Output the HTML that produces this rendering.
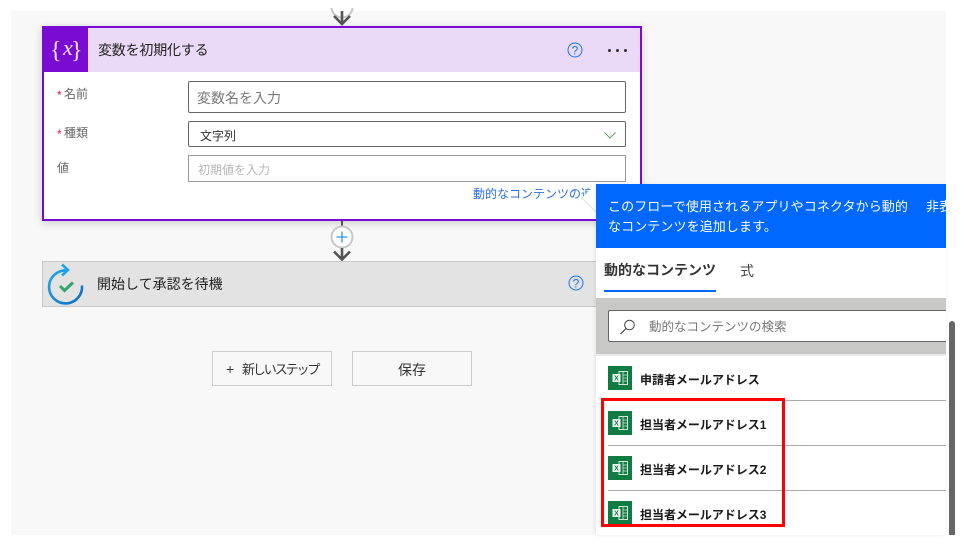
<!DOCTYPE html>
<html lang="ja">
<head>
<meta charset="utf-8">
<style>
html,body{margin:0;padding:0;background:#fff;}
body{width:962px;height:546px;position:relative;overflow:hidden;font-family:"Liberation Sans","Noto Sans CJK JP",sans-serif;color:#333;}
.a{position:absolute;box-sizing:border-box;}
.t{position:absolute;white-space:nowrap;line-height:1;}
.item{position:absolute;left:640px;font-size:12px;font-weight:700;color:#1a1a1a;white-space:nowrap;line-height:1;letter-spacing:-.03px;}
.sep{position:absolute;left:608px;width:338px;height:1px;background:#ababab;}
.star{position:absolute;white-space:nowrap;line-height:1;color:#e8112d;font-size:12px;}
</style>
</head>
<body>
<div class="a" style="left:11px;top:11px;width:935px;height:524px;background:#f8f8f8;"></div>

<!-- top arrow -->
<svg class="a" style="left:330px;top:8px;" width="24" height="20" viewBox="0 0 24 20">
<circle cx="12" cy="-1" r="10.500" fill="#fff" stroke="#c8c8c8" stroke-width="2"/>
<path d="M12 3V16M4 8L12 16L20 8" fill="none" stroke="#555" stroke-width="2.600"/>
</svg>

<!-- card -->
<div class="a" style="left:42px;top:26px;width:600px;height:195px;background:#fff;border:2px solid #7a0bd2;box-shadow:0 2px 8px rgba(0,0,0,.18);"></div>
<div class="a" style="left:44px;top:28px;width:596px;height:44px;background:#ead9f7;"></div>
<div class="a" style="left:44px;top:28px;width:44px;height:44px;background:#7a0bd2;"></div>
<div class="t" style="left:50px;top:39px;font-size:24px;color:#f3e6ff;font-family:'Liberation Serif',serif;">{</div>
<div class="t" style="left:63px;top:37px;font-size:22px;font-style:italic;color:#f3e6ff;font-family:'Liberation Serif',serif;">x</div>
<div class="t" style="left:71px;top:39px;font-size:24px;color:#f3e6ff;font-family:'Liberation Serif',serif;">}</div>
<div class="t" style="left:98px;top:43px;font-size:14px;letter-spacing:-.2px;color:#222;">変数を初期化する</div>
<svg class="a" style="left:567px;top:42px;" width="16" height="16" viewBox="0 0 16 16">
<circle cx="8" cy="8" r="7" fill="none" stroke="#1a73e8" stroke-width="1"/>
<text x="8" y="12.500" font-size="12" text-anchor="middle" fill="#1a73e8" font-family="Liberation Sans">?</text>
</svg>
<div class="a" style="left:608px;top:49px;width:3px;height:3px;border-radius:50%;background:#333;"></div>
<div class="a" style="left:616px;top:49px;width:3px;height:3px;border-radius:50%;background:#333;"></div>
<div class="a" style="left:624px;top:49px;width:3px;height:3px;border-radius:50%;background:#333;"></div>

<div class="star" style="left:57px;top:89px;">*</div>
<div class="t" style="left:64px;top:88px;font-size:12px;color:#666;">名前</div>
<div class="a" style="left:188px;top:81px;width:438px;height:32px;border:1px solid #666;border-radius:2px;background:#fff;"></div>
<div class="t" style="left:197px;top:91px;font-size:14px;color:#777;">変数名を入力</div>

<div class="star" style="left:57px;top:128px;">*</div>
<div class="t" style="left:64px;top:127px;font-size:12px;color:#666;">種類</div>
<div class="a" style="left:188px;top:121px;width:438px;height:26px;border:1px solid #666;border-radius:2px;background:#fff;"></div>
<div class="t" style="left:200px;top:130px;font-size:12px;color:#333;">文字列</div>
<svg class="a" style="left:603px;top:131px;" width="14" height="9" viewBox="0 0 14 9"><path d="M1.500 1.500L7 7L12.500 1.500" fill="none" stroke="#6a9a6a" stroke-width="1"/></svg>

<div class="t" style="left:57px;top:162px;font-size:12px;color:#666;">値</div>
<div class="a" style="left:188px;top:155px;width:438px;height:27px;border:1px solid #999;background:#fff;"></div>
<div class="t" style="left:198px;top:164px;font-size:12px;color:#b5b5b5;">初期値を入力</div>

<div class="t" style="left:473px;top:188px;font-size:12px;color:#2a6fdb;">動的なコンテンツの追加</div>

<!-- connector -->
<div class="a" style="left:341px;top:221px;width:2px;height:6px;background:#555;"></div>
<svg class="a" style="left:330px;top:225px;" width="24" height="37" viewBox="0 0 24 37">
<circle cx="12" cy="12" r="10.500" fill="#fff" stroke="#c8c8c8" stroke-width="2"/>
<path d="M12 6.500V17.500M6.500 12H17.500" stroke="#2f97e0" stroke-width="1.300"/>
<path d="M12 23V34.500M4 26.500L12 34.500L20 26.500" fill="none" stroke="#555" stroke-width="2.600"/>
</svg>

<!-- approval card -->
<div class="a" style="left:42px;top:261px;width:560px;height:46px;background:#e3e3e3;border:1px solid #c8c8c8;"></div>
<svg class="a" style="left:46px;top:262px;" width="38" height="44" viewBox="0 0 38 44">
<defs><linearGradient id="g" x1="0" y1="0" x2="1" y2="1"><stop offset="0" stop-color="#1ea7ef"/><stop offset="1" stop-color="#0f6cbd"/></linearGradient></defs>
<path d="M21 8.500A16.500 16.500 0 1 0 36 23.500" fill="none" stroke="url(#g)" stroke-width="2.600"/>
<path d="M16 2.500L22 8L16 13.500" fill="none" stroke="#1ea7ef" stroke-width="2.600"/>
<path d="M14 24L18.500 28.500L27 20.500" fill="none" stroke="#35a56b" stroke-width="3"/>
</svg>
<div class="t" style="left:97px;top:277px;font-size:14px;color:#222;">開始して承認を待機</div>
<svg class="a" style="left:568px;top:275px;" width="16" height="16" viewBox="0 0 16 16">
<circle cx="8" cy="8" r="7" fill="none" stroke="#1a73e8" stroke-width="1"/>
<text x="8" y="12.500" font-size="12" text-anchor="middle" fill="#1a73e8" font-family="Liberation Sans">?</text>
</svg>

<!-- buttons -->
<div class="a" style="left:212px;top:351px;width:120px;height:35px;border:1px solid #cdcdcd;background:#f8f8f8;"></div>
<div class="t" style="left:226px;top:362px;font-size:14px;color:#333;">+</div>
<div class="t" style="left:242px;top:363px;font-size:13px;letter-spacing:-2.100px;color:#333;">新しいステップ</div>
<div class="a" style="left:352px;top:351px;width:120px;height:35px;border:1px solid #cdcdcd;background:#f8f8f8;"></div>
<div class="t" style="left:398px;top:363px;font-size:14px;color:#333;">保存</div>

<!-- panel -->
<svg class="a" style="left:580px;top:184px;" width="16" height="30" viewBox="0 0 16 30"><path d="M2 14L16 0V28Z" fill="#fff"/><path d="M2 14L16 28" stroke="#e4e4e4" stroke-width="1.200" fill="none"/></svg>
<div class="a" style="left:596px;top:184px;width:350px;height:351px;background:#fff;box-shadow:-1px 0 4px rgba(0,0,0,.08);"></div>
<div class="a" style="left:596px;top:184px;width:350px;height:64px;background:#0067ff;overflow:hidden;">
<div class="t" style="left:12px;top:16px;font-size:13px;letter-spacing:.1px;color:#fff;">このフローで使用されるアプリやコネクタから動的</div>
<div class="t" style="left:12px;top:36px;font-size:13px;letter-spacing:.1px;color:#fff;">なコンテンツを追加します。</div>
<div class="t" style="left:330px;top:16px;font-size:13px;color:#fff;">非表示</div>
</div>
<div class="t" style="left:604px;top:263px;font-size:14px;font-weight:700;color:#333;">動的なコンテンツ</div>
<div class="t" style="left:740px;top:264px;font-size:14px;color:#444;">式</div>
<div class="a" style="left:604px;top:290px;width:112px;height:2px;background:#0067ff;"></div>
<div class="a" style="left:596px;top:298px;width:350px;height:56px;background:#c8c9c6;"></div>
<div class="a" style="left:596px;top:354px;width:350px;height:2px;background:#eaeaea;"></div>
<div class="a" style="left:608px;top:310px;width:338px;height:32px;background:#fff;border:1px solid #666;border-right:none;border-radius:2px 0 0 2px;"></div>
<svg class="a" style="left:619px;top:318px;" width="18" height="18" viewBox="0 0 18 18"><circle cx="10.500" cy="7" r="4.800" fill="none" stroke="#444" stroke-width="1"/><path d="M7 10.500L1.500 16" stroke="#444" stroke-width="1.200"/></svg>
<div class="t" style="left:649px;top:321px;font-size:12.500px;color:#777;">動的なコンテンツの検索</div>

<!-- list items -->
<svg width="0" height="0" style="position:absolute"><defs>
<symbol id="xl" viewBox="0 0 24 24">
<rect width="24" height="24" fill="#107c41"/>
<path d="M11 5.500H19.500V18.500H11Z" fill="none" stroke="#cfe6d9" stroke-width="1"/>
<path d="M15 5.500V18.500M15 9H19.500M15 12H19.500M15 15H19.500" stroke="#cfe6d9" stroke-width=".8"/>
<rect x="4.500" y="8" width="8" height="8" fill="#f2f7f4"/>
<text x="8.500" y="14.500" font-size="7" font-weight="700" text-anchor="middle" fill="#107c41" font-family="Liberation Sans">X</text>
</symbol>
</defs></svg>

<svg class="a" style="left:608px;top:366px;" width="24" height="24"><use href="#xl"/></svg>
<div class="item" style="top:374px;">申請者メールアドレス</div>
<div class="sep" style="top:400px;"></div>
<svg class="a" style="left:608px;top:411px;" width="24" height="24"><use href="#xl"/></svg>
<div class="item" style="top:419px;">担当者メールアドレス1</div>
<div class="sep" style="top:445px;"></div>
<svg class="a" style="left:608px;top:456px;" width="24" height="24"><use href="#xl"/></svg>
<div class="item" style="top:464px;">担当者メールアドレス2</div>
<div class="sep" style="top:490px;"></div>
<svg class="a" style="left:608px;top:501px;" width="24" height="24"><use href="#xl"/></svg>
<div class="item" style="top:509px;">担当者メールアドレス3</div>

<!-- red highlight -->
<div class="a" style="left:601px;top:398px;width:184px;height:129px;border:3px solid #ff0000;"></div>

<!-- scrollbar -->
<div class="a" style="left:949px;top:321px;width:6px;height:214px;background:#666;border-radius:3px 3px 0 0;"></div>
</body>
</html>
